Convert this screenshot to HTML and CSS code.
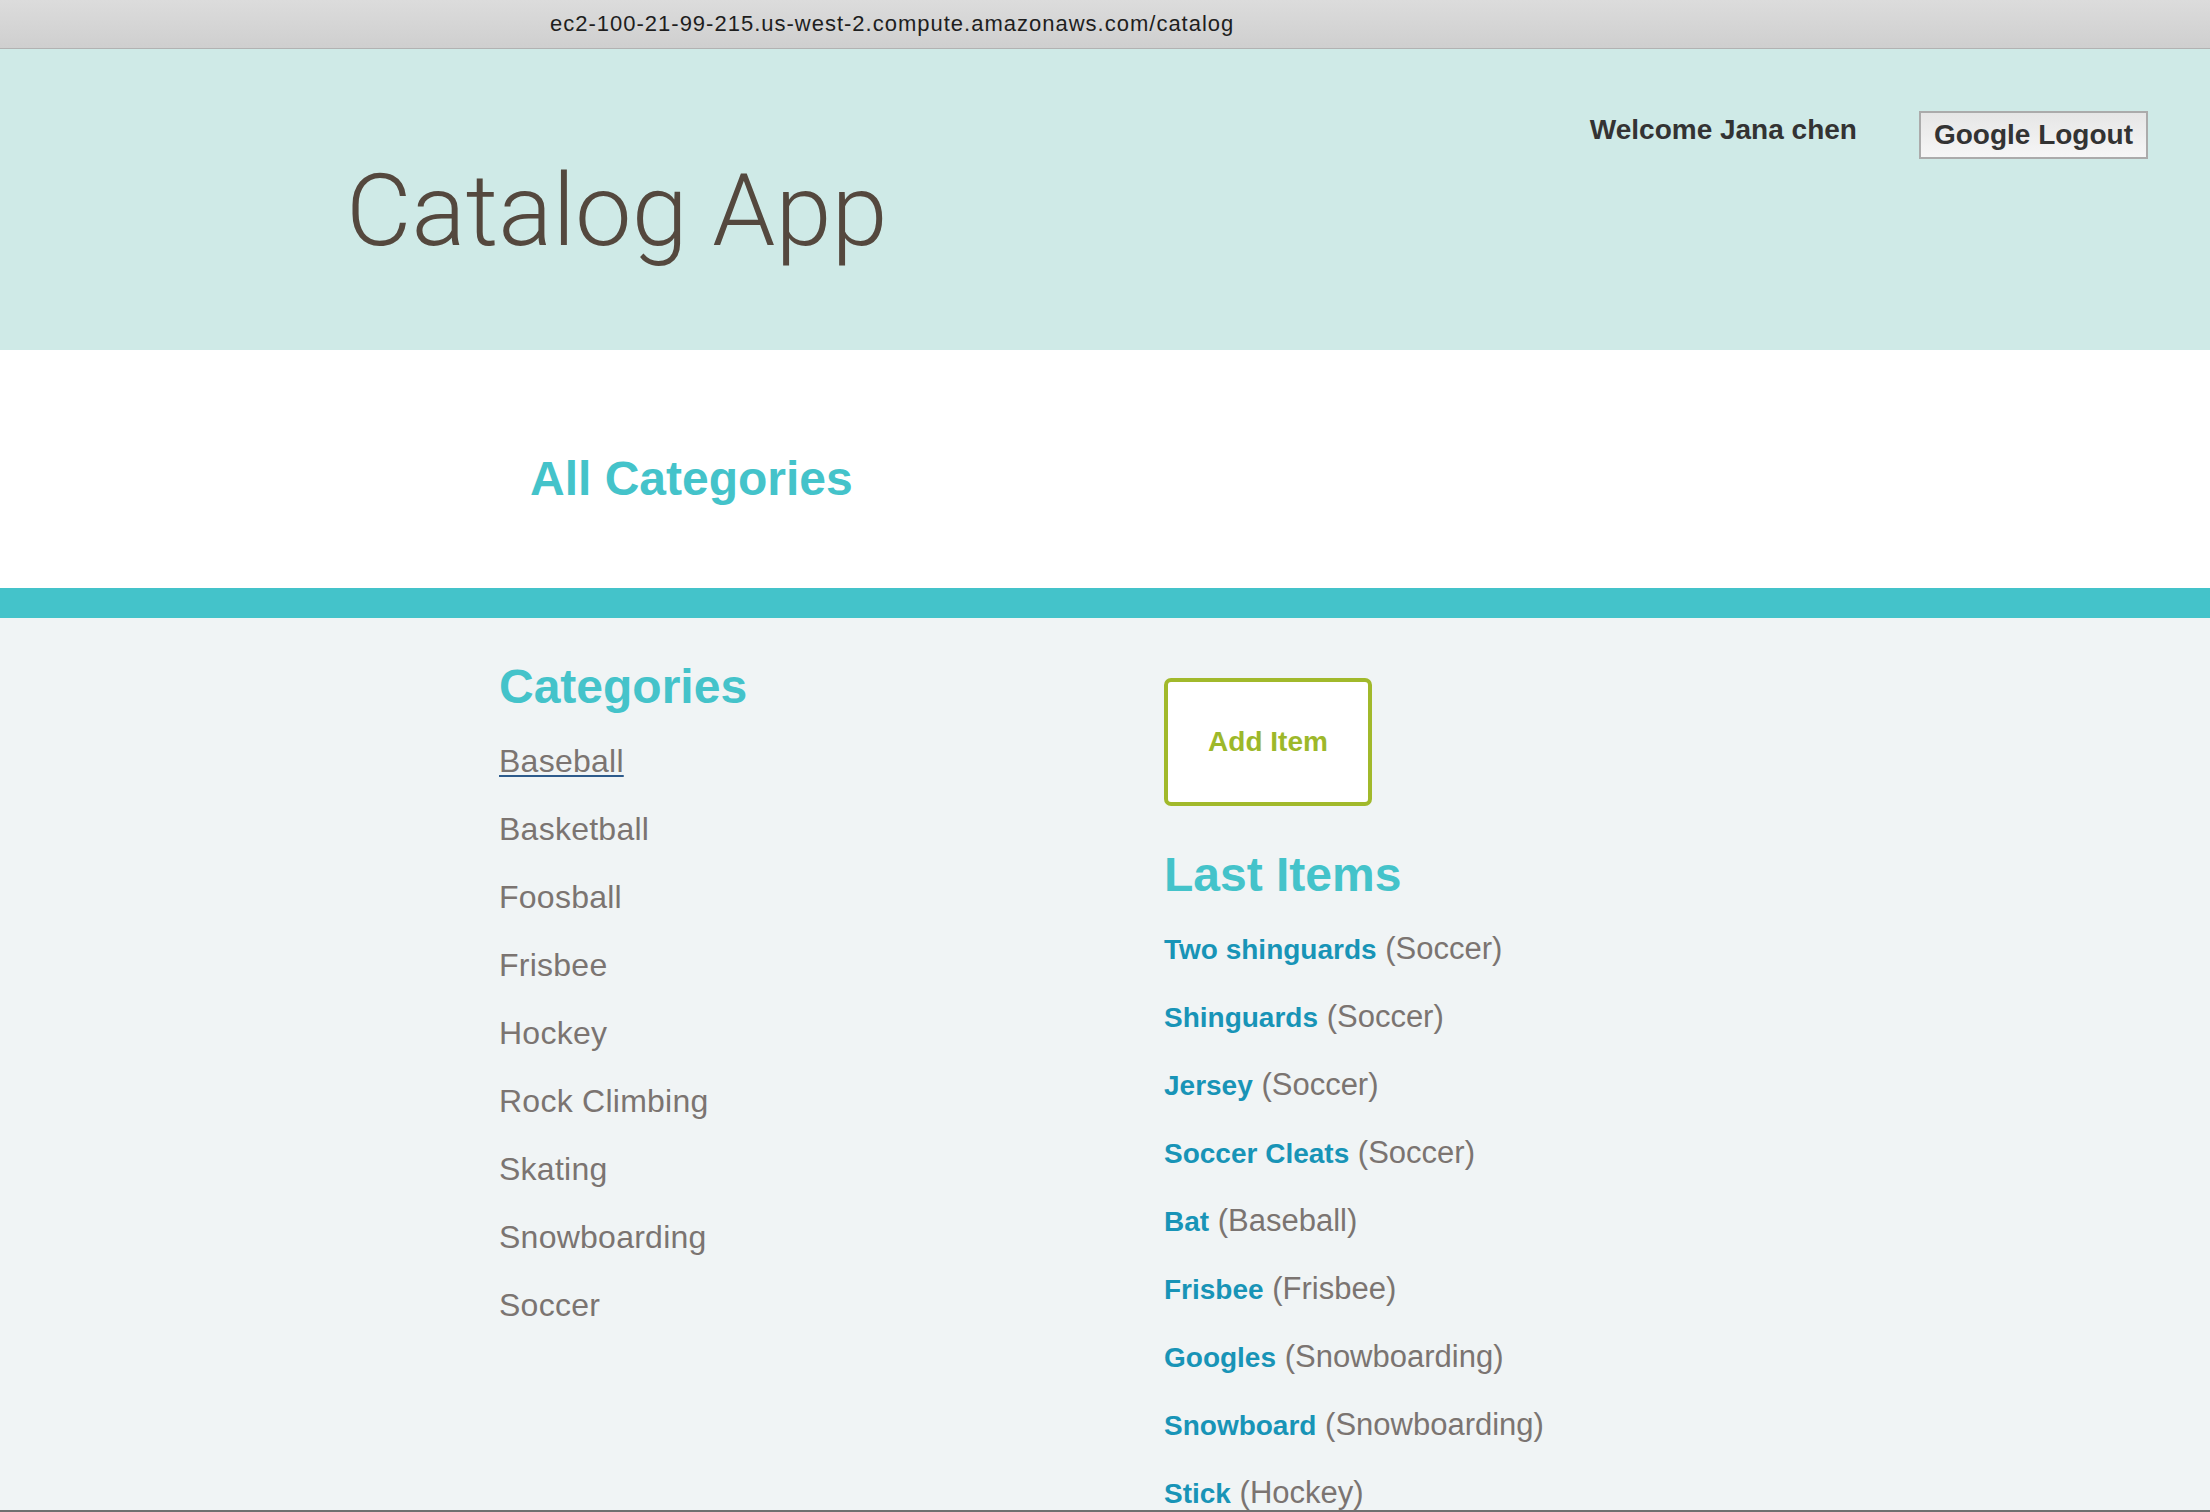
FILE: index.html
```html
<!DOCTYPE html>
<html lang="en">
<head>
<meta charset="utf-8">
<title>Catalog App</title>
<link rel="stylesheet" href="styles.css">
</head>
<body>
<div class="page">
  <div class="chrome"><span class="url">ec2-100-21-99-215.us-west-2.compute.amazonaws.com/catalog</span></div>
  <header class="header">
    <h1 class="brand">Catalog App</h1>
    <div class="user">
      <span class="welcome">Welcome Jana chen</span>
      <button class="logout" type="button">Google Logout</button>
    </div>
  </header>
  <section class="banner">
    <h2 class="banner-title">All Categories</h2>
  </section>
  <div class="rule"></div>
  <main class="content">
    <section class="categories">
      <h3 class="section-title">Categories</h3>
      <ul class="list">
        <li><a class="cat-link active" href="#">Baseball</a></li>
        <li><a class="cat-link" href="#">Basketball</a></li>
        <li><a class="cat-link" href="#">Foosball</a></li>
        <li><a class="cat-link" href="#">Frisbee</a></li>
        <li><a class="cat-link" href="#">Hockey</a></li>
        <li><a class="cat-link" href="#">Rock Climbing</a></li>
        <li><a class="cat-link" href="#">Skating</a></li>
        <li><a class="cat-link" href="#">Snowboarding</a></li>
        <li><a class="cat-link" href="#">Soccer</a></li>
      </ul>
    </section>
    <section class="latest">
      <a class="add-item" href="#">Add Item</a>
      <h3 class="section-title latest-title">Last Items</h3>
      <ul class="list">
        <li><a class="item-name" href="#">Two shinguards</a> <span class="item-cat">(Soccer)</span></li>
        <li><a class="item-name" href="#">Shinguards</a> <span class="item-cat">(Soccer)</span></li>
        <li><a class="item-name" href="#">Jersey</a> <span class="item-cat">(Soccer)</span></li>
        <li><a class="item-name" href="#">Soccer Cleats</a> <span class="item-cat">(Soccer)</span></li>
        <li><a class="item-name" href="#">Bat</a> <span class="item-cat">(Baseball)</span></li>
        <li><a class="item-name" href="#">Frisbee</a> <span class="item-cat">(Frisbee)</span></li>
        <li><a class="item-name" href="#">Googles</a> <span class="item-cat">(Snowboarding)</span></li>
        <li><a class="item-name" href="#">Snowboard</a> <span class="item-cat">(Snowboarding)</span></li>
        <li><a class="item-name" href="#">Stick</a> <span class="item-cat">(Hockey)</span></li>
      </ul>
    </section>
  </main>
</div>
</body>
</html>
```

FILE: styles.css
```css
html, body {
  margin: 0;
  padding: 0;
}

body {
  font-family: "Liberation Sans", Arial, sans-serif;
  background: #f0f4f5;
}

.page {
  height: 1512px;
  overflow: hidden;
  box-sizing: border-box;
  border-bottom: 2px solid #707070;
  background: #f0f4f5;
}

.chrome {
  height: 49px;
  box-sizing: border-box;
  border-bottom: 1px solid #b2b2b2;
  background: linear-gradient(#dcdcdc, #cfcfcf);
  display: flex;
  align-items: center;
  padding-left: 550px;
}

.url {
  font-size: 22px;
  letter-spacing: 1px;
  color: #1e1e1e;
}

.header {
  height: 301px;
  background: #cfeae7;
  display: flex;
  justify-content: space-between;
  align-items: flex-start;
}

.brand {
  margin: 102px 0 0 346px;
  font-family: Roboto, "Liberation Sans", sans-serif;
  font-weight: 300;
  font-size: 101px;
  line-height: 120px;
  color: #54483e;
}

.user {
  margin: 62px 62px 0 0;
  display: flex;
  align-items: flex-start;
  gap: 62px;
}

.welcome {
  margin-top: 3px;
  font-size: 28px;
  line-height: 32px;
  font-weight: bold;
  color: #333333;
}

.logout {
  height: 48px;
  box-sizing: border-box;
  padding: 0 13px;
  border: 2px solid #ababab;
  border-radius: 0;
  background: linear-gradient(#e6e6e6, #f6f6f6);
  font-family: "Liberation Sans", Arial, sans-serif;
  font-size: 28px;
  line-height: 44px;
  font-weight: bold;
  color: #333333;
}

.banner {
  height: 238px;
  box-sizing: border-box;
  background: #ffffff;
  padding: 101px 0 0 530px;
}

.banner-title {
  margin: 0;
  font-size: 48px;
  line-height: 56px;
  font-weight: bold;
  color: #44c3ca;
}

.rule {
  height: 30px;
  background: #44c3ca;
}

.content {
  display: flex;
  align-items: flex-start;
  padding: 41px 0 0 499px;
}

.categories {
  width: 665px;
}

.section-title {
  margin: 0 0 12px 0;
  font-size: 48px;
  line-height: 56px;
  font-weight: bold;
  color: #44c3ca;
}

.list {
  list-style: none;
  margin: 0;
  padding: 0;
}

.list li {
  font-size: 31px;
  line-height: 68px;
  height: 68px;
  white-space: nowrap;
}

.cat-link {
  font-size: 32px;
  letter-spacing: 0.25px;
  color: #7b7471;
  text-decoration: none;
}

.cat-link.active {
  text-decoration: underline;
  text-decoration-color: #2d5b8c;
  text-decoration-thickness: 2px;
  text-underline-offset: 3px;
}

.latest {
  margin-top: 19px;
}

.add-item {
  width: 208px;
  height: 128px;
  box-sizing: border-box;
  border: 4px solid #a1b92b;
  border-radius: 7px;
  background: #ffffff;
  display: flex;
  align-items: center;
  justify-content: center;
  font-size: 28px;
  font-weight: bold;
  color: #9db82a;
  text-decoration: none;
}

.latest-title {
  margin-top: 41px;
}

.item-name {
  font-size: 28px;
  line-height: 1;
  font-weight: bold;
  color: #1894b7;
  text-decoration: none;
}

.item-cat {
  color: #7b7471;
}
```
